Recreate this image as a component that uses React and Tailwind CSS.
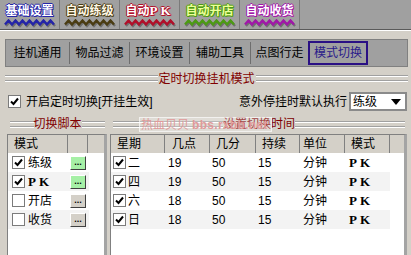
const topTabs = [
  { label: '基础设置', cls: 'text-white [text-shadow:1px_0_#2424a8,-1px_0_#2424a8,0_1px_#2424a8,0_-1px_#2424a8,1px_1px_#2424a8]', wave: '#2424a8' },
  { label: '自动练级', cls: 'text-[#fff8e6] [text-shadow:1px_0_#4a3c12,-1px_0_#4a3c12,0_1px_#4a3c12,0_-1px_#4a3c12,1px_1px_#4a3c12]', wave: '#4a3c12' },
  { label: '自动', pk: true, cls: 'text-white [text-shadow:1px_0_#b0102a,-1px_0_#b0102a,0_1px_#b0102a,0_-1px_#b0102a,1px_1px_#b0102a]', wave: '#b0102a' },
  { label: '自动开店', cls: 'text-[#ecff9a] [text-shadow:1px_0_#4c9a14,-1px_0_#4c9a14,0_1px_#4c9a14,0_-1px_#4c9a14,1px_1px_#4c9a14]', wave: '#4c9a14' },
  { label: '自动收货', cls: 'text-white [text-shadow:1px_0_#a018a8,-1px_0_#a018a8,0_1px_#a018a8,0_-1px_#a018a8,1px_1px_#a018a8]', wave: '#a018a8' },
]

const scripts = [
  { name: '练级', on: true, green: true },
  { name: 'PK', on: true, green: true, pk: true },
  { name: '开店', on: false },
  { name: '收货', on: false },
]

const times = [
  { day: '二', h: '19', m: '50' },
  { day: '四', h: '19', m: '50' },
  { day: '六', h: '18', m: '50' },
  { day: '日', h: '18', m: '50' },
]

function Wave({ color }) {
  const pts = []
  for (let i = 0; i <= 14; i++) pts.push(`${1 + i * 3.5},${i % 2 ? 1.5 : 5.5}`)
  const shadow = pts.map(p => {
    const [x, y] = p.split(',').map(Number)
    return `${x + 1},${y + 1.5}`
  })
  return (
    <svg width="52" height="9" viewBox="0 0 52 9" className="mt-[2px]">
      <polyline points={shadow.join(' ')} fill="none" stroke="#5a5a5a" strokeWidth="2.4" opacity="0.7" />
      <polyline points={pts.join(' ')} fill="none" stroke={color} strokeWidth="2.4" />
    </svg>
  )
}

function Check({ on }) {
  return (
    <span className="w-[13px] h-[13px] border border-[#7b7b7b] bg-white flex items-center justify-center shrink-0">
      {on && (
        <svg width="9" height="9" viewBox="0 0 9 9">
          <path d="M1 4.5 L3.5 7 L8 1.5" fill="none" stroke="#000" strokeWidth="2" />
        </svg>
      )}
    </span>
  )
}

function Groove() {
  return (
    <div className="flex-1 flex flex-col gap-[3px]">
      <div className="h-[2px] border-t border-[#a0a0a0] bg-white" />
      <div className="h-[2px] border-t border-[#a0a0a0] bg-white" />
    </div>
  )
}

function Pk({ className = '' }) {
  return <span className={`font-['Liberation_Serif',serif] font-bold tracking-[3px] ${className}`}>PK</span>
}

export default function App() {
  return (
    <div className="relative w-[411px] h-[255px] overflow-hidden bg-[#d4d0c8] text-[12px] leading-none text-black font-['Liberation_Sans','Noto_Sans_CJK_SC',sans-serif]">

      {/* Top tab bar */}
      <div className="flex h-[30px] bg-[#a0a0a0] border-b border-[#5a5a5a]">
        {topTabs.map((t, i) => (
          <div key={i} className="w-[60px] flex flex-col items-center pt-[4px] border-r border-[#7a7a7a]">
            <span className={`font-bold text-[12px] h-[13px] flex items-center ${t.cls}`}>
              {t.label}{t.pk && <Pk className="text-[13px]" />}
            </span>
            <Wave color={t.wave} />
          </div>
        ))}
      </div>
      <div className="h-px bg-white" />

      {/* Second tab strip */}
      <div className="mt-[8px] ml-[5px] w-[403px] h-[28px] border border-[#808080] bg-[#a0a0a0] flex items-center">
        <div className="w-[63px] h-[22px] flex items-center justify-center">挂机通用</div>
        <div className="w-[60px] h-[22px] flex items-center justify-center border-l border-[#6e6e6e]">物品过滤</div>
        <div className="w-[60px] h-[22px] flex items-center justify-center border-l border-[#6e6e6e]">环境设置</div>
        <div className="w-[61px] h-[22px] flex items-center justify-center border-l border-[#6e6e6e]">辅助工具</div>
        <div className="w-[58px] h-[22px] flex items-center justify-center border-l border-[#6e6e6e]">点图行走</div>
        <div className="w-[60px] h-[24px] flex items-center justify-center border-2 border-[#2a1084] text-[#2a1a8a]">模式切换</div>
      </div>

      {/* Section title */}
      <div className="mt-[5px] h-[13px] flex items-center pl-[5px] pr-[3px]">
        <Groove />
        <span className="text-[#800000] px-px">定时切换挂机模式</span>
        <Groove />
      </div>

      {/* Enable row */}
      <div className="mt-[7px] h-[19px] flex items-center pl-[8px] pr-[4px]">
        <Check on />
        <span className="ml-[5px]">开启定时切换[开挂生效]</span>
        <span className="ml-auto">意外停挂时默认执行</span>
        <div className="ml-[2px] w-[58px] h-[19px] border-2 border-[#8a8a8a] bg-white flex items-center pl-[2px] pr-[4px]">
          <span>练级</span>
          <svg width="10" height="6" viewBox="0 0 10 6" className="ml-auto">
            <path d="M0 0 H10 L5 6 Z" fill="#000" />
          </svg>
        </div>
      </div>

      {/* Sub headers */}
      <div className="mt-[6px] h-[14px] flex gap-[8px] pl-[10px] pr-[6px]">
        <div className="w-[95px] flex items-center">
          <Groove />
          <span className="text-[#800000]">切换脚本</span>
          <Groove />
        </div>
        <div className="flex-1 flex items-center">
          <Groove />
          <span className="text-[#800000]">设置切换时间</span>
          <Groove />
        </div>
      </div>

      {/* Lists */}
      <div className="mt-[3px] flex gap-[3px] pl-[7px] pr-[4px]">
        <div className="w-[100px] h-[130px] border-l border-t border-[#808080] border-r-[3px] border-r-[#a4a4a4] bg-white">
          <div className="h-[18px] flex bg-[#d4d0c8]">
            <div className="w-[60px] border-r border-[#808080] pl-[6px] flex items-center">模式</div>
            <div className="w-[20px] border-r border-[#808080]" />
            <div className="flex-1" />
          </div>
          {scripts.map((s, i) => (
            <div key={i} className={`w-[81px] h-[19px] flex items-center pl-[4px] pr-[3px] ${i % 2 ? 'bg-[#f3f3f3]' : 'bg-white'}`}>
              <Check on={s.on} />
              <span className="ml-[3px] flex-1">{s.pk ? <Pk className="text-[13px]" /> : s.name}</span>
              <span className={`w-[16px] h-[14px] flex items-end justify-center pb-[2px] border border-t-white border-l-white border-b-[#404040] border-r-[#404040] text-[9px] font-bold ${s.green ? 'bg-[#a6f0a6]' : 'bg-[#d4d0c8]'}`}>...</span>
            </div>
          ))}
        </div>

        <div className="flex-1 h-[130px] border-l border-t border-[#808080] border-r-[3px] border-r-[#a4a4a4] bg-white">
          <div className="h-[18px] flex bg-[#d4d0c8]">
            <div className="w-[54px] border-r border-[#808080] pl-[6px] flex items-center">星期</div>
            <div className="w-[45px] border-r border-[#808080] pl-[7px] flex items-center">几点</div>
            <div className="w-[46px] border-r border-[#808080] pl-[6px] flex items-center">几分</div>
            <div className="w-[44px] border-r border-[#808080] pl-[6px] flex items-center">持续</div>
            <div className="w-[45px] border-r border-[#808080] pl-[3px] flex items-center">单位</div>
            <div className="w-[45px] border-r border-[#808080] pl-[6px] flex items-center">模式</div>
            <div className="flex-1" />
          </div>
          {times.map((t, i) => (
            <div key={i} className={`w-[279px] h-[19px] flex items-center ${i % 2 ? 'bg-[#f3f3f3]' : 'bg-white'}`}>
              <div className="w-[54px] flex items-center pl-[2px]">
                <Check on />
                <span className="ml-[2px]">{t.day}</span>
              </div>
              <div className="w-[45px] pl-[3px]">{t.h}</div>
              <div className="w-[46px] pl-[2px]">{t.m}</div>
              <div className="w-[44px] pl-[2px]">15</div>
              <div className="w-[45px] pl-[3px]">分钟</div>
              <div className="w-[45px] pl-[4px]"><Pk className="text-[13px]" /></div>
            </div>
          ))}
        </div>
      </div>

      {/* Watermark */}
      <div className="absolute left-[139px] top-[117px] w-[133px] h-[15px] border border-white/60 bg-white/25 flex items-center pl-[1px] text-[#e09a9a]">
        <span className="text-[12px]">热血贝贝</span>
        <span className="ml-[3px] text-[12px] font-bold tracking-[0.3px]">bbs.rxbb.net</span>
      </div>
    </div>
  )
}
